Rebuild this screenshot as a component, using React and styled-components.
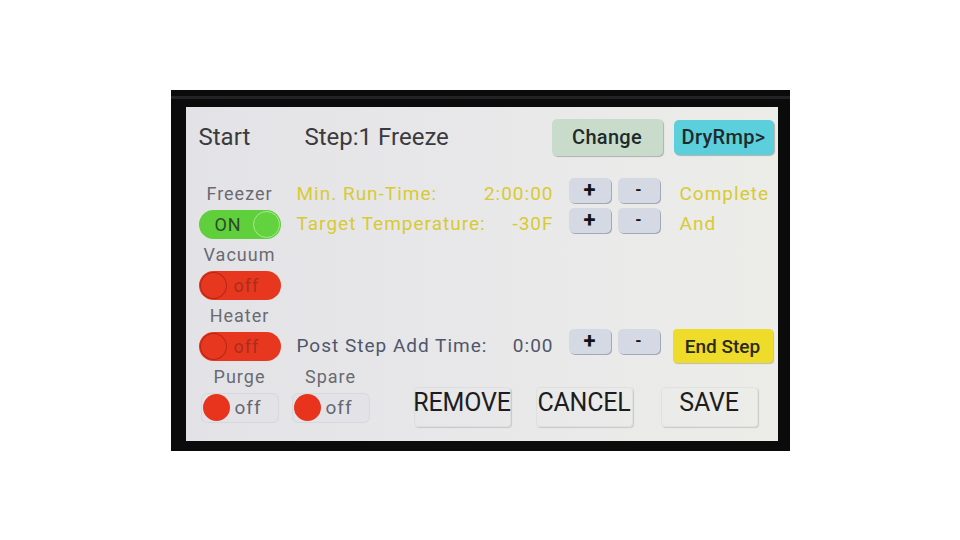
import React from 'react';
import styled, { createGlobalStyle } from 'styled-components';

const GlobalStyle = createGlobalStyle`
	html, body {
		margin: 0;
		padding: 0;
		background: #ffffff;
	}
	body {
		font-family: Roboto, 'Liberation Sans', sans-serif;
	}
`;

const App = () => {
	return (
		<Page>
			<GlobalStyle />
			<Bezel>
				<Screen>
					<Header>
						<Title width={106}>Start</Title>
						<Title>Step:1 Freeze</Title>
						<Spacer />
						<TopButton tone="change">Change</TopButton>
						<TopButton tone="next">DryRmp&gt;</TopButton>
					</Header>

					<Body>
						<LeftCol>
							<Group>
								<Label>Freezer</Label>
								<Switch on />
							</Group>
							<Group>
								<Label>Vacuum</Label>
								<Switch />
							</Group>
							<Group>
								<Label>Heater</Label>
								<Switch />
							</Group>
						</LeftCol>

						<MainCol>
							<ParamRow>
								<Field yellow>
									<span>Min. Run-Time:</span>
									<span>2:00:00</span>
								</Field>
								<StepButton>+</StepButton>
								<StepButton minus>-</StepButton>
								<Note>Complete</Note>
							</ParamRow>
							<ParamRow>
								<Field yellow>
									<span>Target Temperature:</span>
									<span>-30F</span>
								</Field>
								<StepButton>+</StepButton>
								<StepButton minus>-</StepButton>
								<Note>And</Note>
							</ParamRow>

							<PostRow>
								<Field>
									<span>Post Step Add Time:</span>
									<span>0:00</span>
								</Field>
								<StepButton top>+</StepButton>
								<StepButton top minus>-</StepButton>
								<EndStep>End Step</EndStep>
							</PostRow>
						</MainCol>
					</Body>

					<BottomRow>
						<Group width={82}>
							<Label>Purge</Label>
							<Check />
						</Group>
						<Group width={76} gapLeft={12}>
							<Label>Spare</Label>
							<Check />
						</Group>
						<BigButton gapLeft={45}>REMOVE</BigButton>
						<BigButton gapLeft={25}>CANCEL</BigButton>
						<BigButton gapLeft={28}>SAVE</BigButton>
					</BottomRow>
				</Screen>
			</Bezel>
		</Page>
	);
};

const Switch = ({ on }) => (
	<Pill on={on ? 1 : 0}>
		{on ? (
			<>
				<PillText on={1}>ON</PillText>
				<Knob on={1} />
			</>
		) : (
			<>
				<Knob />
				<PillText>off</PillText>
			</>
		)}
	</Pill>
);

const Check = () => (
	<CheckBox>
		<Dot />
		<CheckText>off</CheckText>
	</CheckBox>
);

export default App;

const Page = styled.div`
	width: 960px;
	height: 540px;
	display: flex;
	align-items: center;
	justify-content: center;
`;

const Bezel = styled.div`
	box-sizing: border-box;
	width: 619px;
	height: 361px;
	padding: 17px 12px 10px 15px;
	display: flex;
	background: linear-gradient(
		#0b0b0b 0 6px,
		#232325 6px 9px,
		#0b0b0b 9px
	);
`;

const Screen = styled.div`
	flex: 1;
	display: flex;
	flex-direction: column;
	padding: 12px 4px 0 13px;
	background: linear-gradient(90deg, #e3e3e7, #e9e9ea 60%, #ececE8);
`;

const Header = styled.div`
	display: flex;
	align-items: center;
	height: 37px;
`;

const Title = styled.div`
	width: ${(p) => (p.width ? `${p.width}px` : 'auto')};
	font-size: 24px;
	color: #3b3b3e;
	white-space: nowrap;
`;

const Spacer = styled.div`
	flex: 1;
`;

const TopButton = styled.div`
	display: flex;
	align-items: center;
	justify-content: center;
	width: ${(p) => (p.tone === 'change' ? '111px' : '100px')};
	height: ${(p) => (p.tone === 'change' ? '37px' : '35px')};
	margin-right: ${(p) => (p.tone === 'change' ? '11px' : '0')};
	border-radius: 5px;
	background: ${(p) => (p.tone === 'change' ? '#c9dccb' : '#5ccfdc')};
	box-shadow: 1px 1px 1px rgba(0, 0, 0, 0.25);
	font-size: 20px;
	font-weight: 500;
	color: #1f2a2a;
	letter-spacing: 0.3px;
`;

const Body = styled.div`
	display: flex;
	margin-top: 22px;
`;

const LeftCol = styled.div`
	width: 82px;
	padding-top: 5px;
	display: flex;
	flex-direction: column;
	gap: 5px;
`;

const Group = styled.div`
	display: flex;
	flex-direction: column;
	align-items: center;
	gap: 5px;
	width: ${(p) => (p.width ? `${p.width}px` : 'auto')};
	margin-left: ${(p) => (p.gapLeft ? `${p.gapLeft}px` : '0')};
`;

const Label = styled.div`
	height: 22px;
	line-height: 22px;
	font-size: 18px;
	letter-spacing: 1px;
	color: #6a6a72;
	white-space: nowrap;
`;

const Pill = styled.div`
	box-sizing: border-box;
	width: 82px;
	height: 29px;
	border-radius: 15px;
	display: flex;
	align-items: center;
	padding: 0 1px;
	background: ${(p) => (p.on ? '#5fcf3b' : '#e8371f')};
`;

const Knob = styled.div`
	box-sizing: border-box;
	width: 27px;
	height: 27px;
	border-radius: 50%;
	border: 1.5px solid
		${(p) => (p.on ? '#a9e994' : 'rgba(120, 20, 10, 0.45)')};
	background: ${(p) => (p.on ? '#62d23e' : '#e8371f')};
`;

const PillText = styled.div`
	flex: 1;
	text-align: ${(p) => (p.on ? 'center' : 'left')};
	padding-left: ${(p) => (p.on ? '4px' : '7px')};
	font-size: 18px;
	letter-spacing: 1px;
	color: ${(p) => (p.on ? '#2c4a2d' : '#a92e1d')};
`;

const MainCol = styled.div`
	flex: 1;
	margin-left: 16px;
	display: flex;
	flex-direction: column;
	gap: 5px;
`;

const ParamRow = styled.div`
	display: flex;
	align-items: center;
	height: 25px;
`;

const PostRow = styled.div`
	display: flex;
	align-items: center;
	height: 35px;
	margin-top: auto;
	margin-bottom: -3px;
`;

const Field = styled.div`
	width: 257px;
	display: flex;
	justify-content: space-between;
	padding-top: ${(p) => (p.yellow ? '7px' : '0')};
	line-height: 22px;
	font-size: 19px;
	letter-spacing: 1px;
	color: ${(p) => (p.yellow ? '#d8ca34' : '#50566a')};
	white-space: nowrap;
`;

const StepButton = styled.div`
	display: flex;
	align-items: center;
	justify-content: center;
	align-self: ${(p) => (p.top ? 'flex-start' : 'center')};
	width: 42px;
	height: 25px;
	margin-left: ${(p) => (p.minus ? '7px' : '15px')};
	border-radius: 5px;
	background: #d5d9e3;
	box-shadow: 1px 1px 0 #a2a8b8;
	font-size: ${(p) => (p.minus ? '16px' : '22px')};
	font-weight: 700;
	color: #141418;
	line-height: 1;
`;

const Note = styled.div`
	margin-left: 20px;
	padding-top: 7px;
	line-height: 22px;
	font-size: 19px;
	letter-spacing: 1px;
	color: #d8ca34;
	white-space: nowrap;
`;

const EndStep = styled.div`
	display: flex;
	align-items: center;
	justify-content: center;
	width: 100px;
	height: 34px;
	margin-left: 13px;
	border-radius: 4px;
	background: #efdb2a;
	box-shadow: 1px 1px 1px rgba(0, 0, 0, 0.2);
	font-size: 19px;
	font-weight: 500;
	color: #2a2a1c;
`;

const BottomRow = styled.div`
	display: flex;
	align-items: flex-start;
	margin-top: 5px;
`;

const CheckBox = styled.div`
	box-sizing: border-box;
	width: 78px;
	height: 30px;
	display: flex;
	align-items: center;
	padding-left: 1px;
	border-radius: 6px;
	border: 1px solid #d8d8dc;
	background: #e3e3e7;
`;

const Dot = styled.div`
	width: 27px;
	height: 27px;
	border-radius: 50%;
	background: #e8331d;
`;

const CheckText = styled.div`
	margin-left: 5px;
	font-size: 19px;
	letter-spacing: 1px;
	color: #66666e;
`;

const BigButton = styled.div`
	box-sizing: border-box;
	display: flex;
	align-items: center;
	justify-content: center;
	align-self: flex-end;
	width: 97px;
	height: 40px;
	padding-bottom: 8px;
	margin-left: ${(p) => `${p.gapLeft}px`};
	margin-bottom: -4px;
	border-radius: 4px;
	border: 1px solid rgba(0, 0, 0, 0.04);
	box-shadow: 1px 1px 1px rgba(0, 0, 0, 0.14);
	font-size: 25px;
	letter-spacing: -0.2px;
	color: #1d1d20;
	white-space: nowrap;
`;
